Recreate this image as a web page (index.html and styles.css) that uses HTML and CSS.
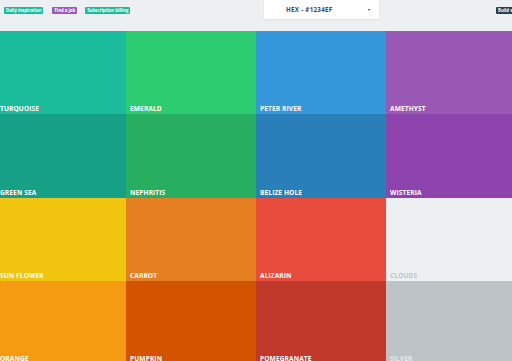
FILE: index.html
```html
<!DOCTYPE html>
<html>
<head>
<meta charset="utf-8">
<link rel="stylesheet" href="styles.css">
</head>
<body>
<header class="top">
  <div class="tags">
    <span class="tag teal">Daily inspiration</span>
    <span class="tag purple">Find a job</span>
    <span class="tag teal">Subscription billing</span>
  </div>
  <div class="select">
    <span class="select-text">HEX - #1234EF</span>
    <span class="select-arrow">▼</span>
  </div>
  <span class="tag dark">Build w</span>
</header>
<main class="grid">
  <div class="cell c-turquoise"><span>Turquoise</span></div>
  <div class="cell c-emerald"><span>Emerald</span></div>
  <div class="cell c-peter"><span>Peter River</span></div>
  <div class="cell c-amethyst"><span>Amethyst</span></div>
  <div class="cell c-greensea"><span>Green Sea</span></div>
  <div class="cell c-nephritis"><span>Nephritis</span></div>
  <div class="cell c-belize"><span>Belize Hole</span></div>
  <div class="cell c-wisteria"><span>Wisteria</span></div>
  <div class="cell c-sunflower"><span>Sun Flower</span></div>
  <div class="cell c-carrot"><span>Carrot</span></div>
  <div class="cell c-alizarin"><span>Alizarin</span></div>
  <div class="cell c-clouds"><span>Clouds</span></div>
  <div class="cell c-orange"><span>Orange</span></div>
  <div class="cell c-pumpkin"><span>Pumpkin</span></div>
  <div class="cell c-pomegranate"><span>Pomegranate</span></div>
  <div class="cell c-silver"><span>Silver</span></div>
</main>
</body>
</html>
```
FILE: styles.css
```css
* { box-sizing: border-box; }
html, body {
  margin: 0;
  padding: 0;
  width: 512px;
  height: 361px;
  overflow: hidden;
  background: #edf0f2;
  font-family: "Open Sans", "Liberation Sans", sans-serif;
}
.top {
  height: 31px;
  display: flex;
  align-items: flex-start;
  background: #edf0f2;
}
.tags {
  display: flex;
  gap: 8px;
  padding: 7px 0 0 4px;
  flex: 0 0 264px;
}
.tag {
  display: inline-block;
  height: 7px;
  line-height: 7px;
  padding: 0 2px;
  font-size: 4.3px;
  font-weight: 700;
  color: #fff;
  border-radius: 1px;
  white-space: nowrap;
}
.tags .tag:nth-child(2) { margin-left: 1px; }
.teal { background: #1abc9c; }
.purple { background: #9b59b6; }
.dark {
  background: #2c3e50;
  margin: 7px 0 0 117px;
}
.select {
  flex: 0 0 115px;
  height: 19px;
  background: #fff;
  display: flex;
  align-items: center;
  box-shadow: 0 1px 2px rgba(0,0,0,0.06);
  font-size: 6.2px;
  font-weight: 700;
  color: #34495e;
  letter-spacing: 0.3px;
}
.select-text {
  flex: 1;
  padding-left: 22px;
}
.select-arrow {
  font-size: 3.6px;
  padding-right: 8px;
}
.grid {
  display: grid;
  grid-template-columns: repeat(4, 130px);
  grid-auto-rows: 83.3px;
  margin-left: -4px;
  width: 520px;
}
.cell {
  display: flex;
  align-items: flex-end;
  padding: 0 0 1px 4px;
}
.cell span {
  font-size: 6.6px;
  font-weight: 700;
  text-transform: uppercase;
  color: #fff;
  line-height: 8px;
  letter-spacing: 0.1px;
}
.c-turquoise { background: #1abc9c; }
.c-emerald { background: #2ecc71; }
.c-peter { background: #3498db; }
.c-amethyst { background: #9b59b6; }
.c-greensea { background: #16a085; }
.c-nephritis { background: #27ae60; }
.c-belize { background: #2980b9; }
.c-wisteria { background: #8e44ad; }
.c-sunflower { background: #f1c40f; }
.c-carrot { background: #e67e22; }
.c-alizarin { background: #e74c3c; }
.c-clouds { background: #ecf0f1; }
.c-clouds span { color: #bdc3c7; }
.c-orange { background: #f39c12; }
.c-pumpkin { background: #d35400; }
.c-pomegranate { background: #c0392b; }
.c-silver { background: #bdc3c7; }
.c-silver span { color: #e4e8ea; }
```
